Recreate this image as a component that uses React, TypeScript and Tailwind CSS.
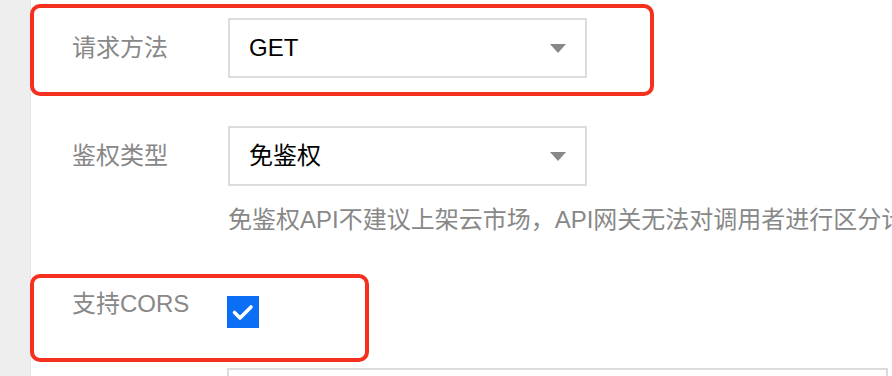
import React from "react";

const font = { fontFamily: '"Liberation Sans", "Noto Sans CJK SC", sans-serif' };

function Select({ value }: { value: string }) {
  return (
    <div className="flex h-[60px] w-[359px] items-center justify-between border-2 border-[#dcdcdc] bg-white pl-[19px] pr-[19px]">
      <span className="text-[24px] leading-none text-black">{value}</span>
      <svg width="16" height="9" viewBox="0 0 16 9">
        <path d="M0 0 H16 L8 9 Z" fill="#888888" />
      </svg>
    </div>
  );
}

export default function App() {
  return (
    <div className="relative flex h-[376px] w-[892px] overflow-hidden bg-white" style={font}>
      <div className="w-[31px] shrink-0 border-r border-[#e3e3e3] bg-[#eeeeee]" />

      <div className="flex min-w-0 flex-1 flex-col pl-[41px]">
        <div className="mt-[18px] flex items-center">
          <div className="w-[156px] shrink-0 text-[24px] text-[#888888]">请求方法</div>
          <Select value="GET" />
        </div>

        <div className="mt-[48px] flex items-center">
          <div className="w-[156px] shrink-0 text-[24px] text-[#888888]">鉴权类型</div>
          <Select value="免鉴权" />
        </div>

        <div className="mt-[18px] whitespace-nowrap pl-[156px] text-[24px] leading-[32px] text-[#888888]">
          免鉴权API不建议上架云市场，API网关无法对调用者进行区分计费
        </div>

        <div className="mt-[52px] flex items-start">
          <div className="w-[155px] shrink-0 text-[24px] leading-[32px] text-[#888888]">支持CORS</div>
          <div className="mt-[8px] flex h-[32px] w-[32px] items-center justify-center bg-[#0b6ff5]">
            <svg width="32" height="32" viewBox="0 0 32 32">
              <path d="M7.5 16.5 L13 22 L24 11" fill="none" stroke="white" strokeWidth="3.6" strokeLinecap="round" strokeLinejoin="round" />
            </svg>
          </div>
        </div>

        <div className="ml-[155px] mt-[40px] h-[60px] w-[661px] shrink-0 border-2 border-[#dcdcdc]" />
      </div>

      {/* annotation boxes */}
      <div className="absolute left-[30px] top-[4px] h-[92px] w-[624px] rounded-[10px] border-4 border-[#f5301f]" />
      <div className="absolute left-[30px] top-[274px] h-[88px] w-[339px] rounded-[10px] border-4 border-[#f5301f]" />
    </div>
  );
}
